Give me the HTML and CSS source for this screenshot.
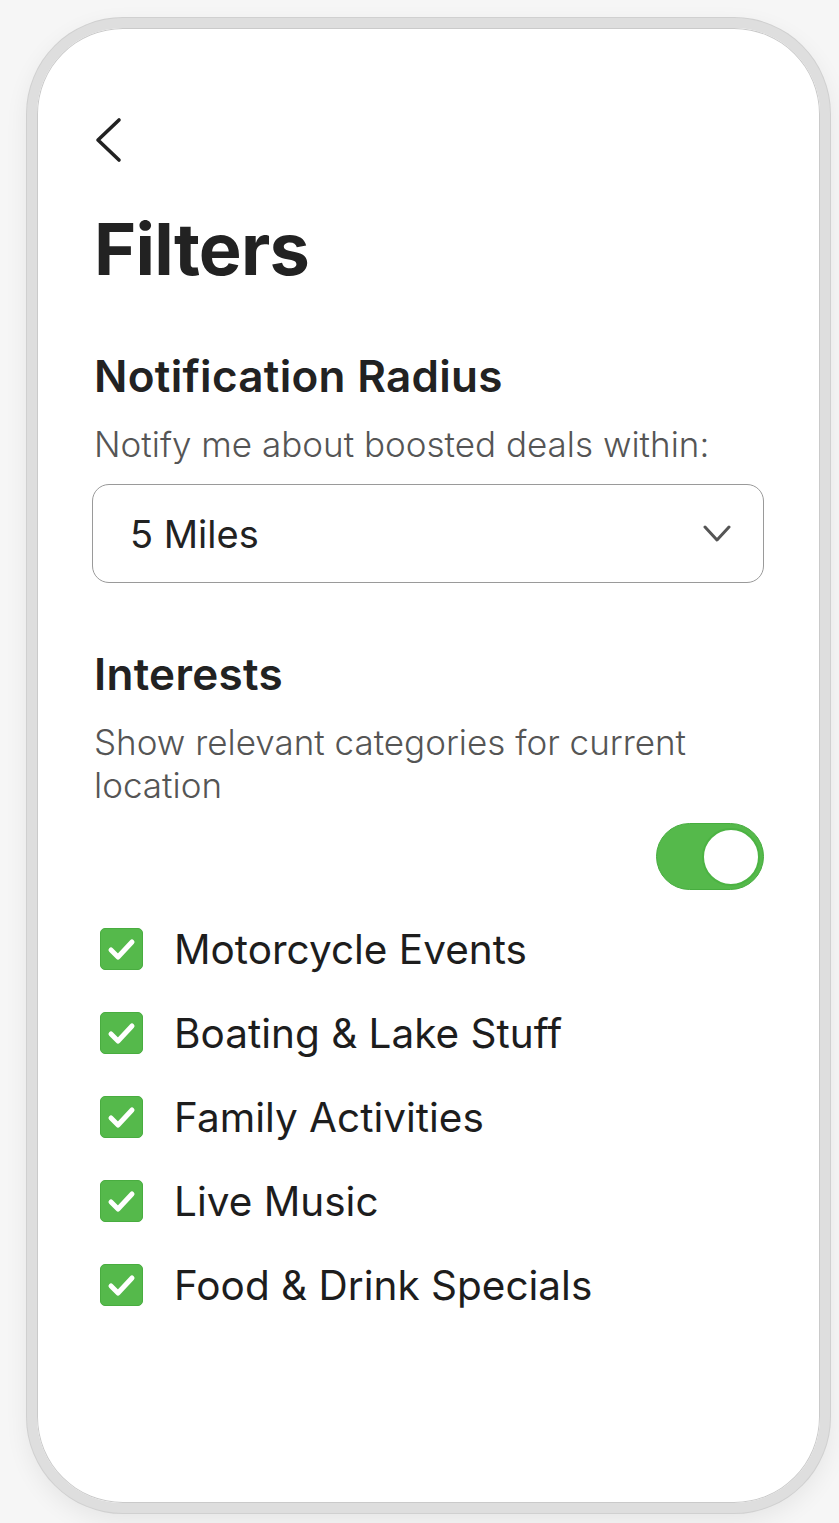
FILE: index.html
```html
<!DOCTYPE html>
<html lang="en">
<head>
<meta charset="utf-8">
<title>Filters</title>
<link rel="stylesheet" href="styles.css">
</head>
<body>
<div class="phone">
  <div class="screen">
    <button class="back" aria-label="Back">
      <svg width="30" height="46" viewBox="0 0 30 46"><polyline points="25,3 4,23 25,43" fill="none" stroke="#222" stroke-width="3.6" stroke-linecap="round" stroke-linejoin="round"/></svg>
    </button>
    <h1 class="title">Filters</h1>

    <h2 class="section-title radius-title">Notification Radius</h2>
    <p class="section-sub">Notify me about boosted deals within:</p>
    <div class="select">
      <span class="select-value">5 Miles</span>
      <svg class="select-chevron" width="28" height="18" viewBox="0 0 28 18"><polyline points="2,2 14,15 26,2" fill="none" stroke="#555" stroke-width="3" stroke-linecap="round" stroke-linejoin="round"/></svg>
    </div>

    <h2 class="section-title interests-title">Interests</h2>
    <p class="section-sub">Show relevant categories for current location</p>
    <div class="toggle-row">
      <div class="toggle"><div class="knob"></div></div>
    </div>

    <ul class="checklist">
      <li class="check-item"><span class="box"><svg width="43" height="42" viewBox="0 0 43 42"><polyline points="11,22 18,29 32,14" fill="none" stroke="#fff" stroke-width="5" stroke-linecap="round" stroke-linejoin="round"/></svg></span><span class="label">Motorcycle Events</span></li>
      <li class="check-item"><span class="box"><svg width="43" height="42" viewBox="0 0 43 42"><polyline points="11,22 18,29 32,14" fill="none" stroke="#fff" stroke-width="5" stroke-linecap="round" stroke-linejoin="round"/></svg></span><span class="label">Boating &amp; Lake Stuff</span></li>
      <li class="check-item"><span class="box"><svg width="43" height="42" viewBox="0 0 43 42"><polyline points="11,22 18,29 32,14" fill="none" stroke="#fff" stroke-width="5" stroke-linecap="round" stroke-linejoin="round"/></svg></span><span class="label">Family Activities</span></li>
      <li class="check-item"><span class="box"><svg width="43" height="42" viewBox="0 0 43 42"><polyline points="11,22 18,29 32,14" fill="none" stroke="#fff" stroke-width="5" stroke-linecap="round" stroke-linejoin="round"/></svg></span><span class="label">Live Music</span></li>
      <li class="check-item"><span class="box"><svg width="43" height="42" viewBox="0 0 43 42"><polyline points="11,22 18,29 32,14" fill="none" stroke="#fff" stroke-width="5" stroke-linecap="round" stroke-linejoin="round"/></svg></span><span class="label">Food &amp; Drink Specials</span></li>
    </ul>
  </div>
</div>
</body>
</html>
```
FILE: styles.css
```css
html, body {
  margin: 0;
  padding: 0;
}
body {
  background: #f6f6f6;
  font-family: Inter, "Noto Sans", "Liberation Sans", sans-serif;
  color: #222;
  width: 839px;
  height: 1523px;
  overflow: hidden;
}
.phone {
  box-sizing: border-box;
  margin: 18px 0 0 27px;
  width: 803px;
  height: 1495px;
  border: 10px solid #dedede;
  border-radius: 96px;
  background: #fff;
  box-shadow: 0 0 0 1px #d0d0d0, inset 0 0 0 1px #cacaca, 0 8px 24px rgba(0,0,0,0.07);
}
.screen {
  padding: 89px 56px 0 57px;
}
.back {
  display: block;
  padding: 0;
  margin: 0;
  border: 0;
  background: none;
  width: 30px;
  height: 46px;
}
.back svg { display: block; }
.title {
  margin: 50px 0 0;
  font-size: 72px;
  line-height: 1;
  font-weight: 700;
  letter-spacing: -0.8px;
  color: #222;
}
.section-title {
  margin: 69px 0 0;
  font-size: 44px;
  line-height: 1;
  font-weight: 600;
  color: #222;
  letter-spacing: 0.3px;
}
.interests-title {
  margin-top: 69px;
}
.section-sub {
  margin: 25px 0 0;
  font-size: 35px;
  line-height: 43px;
  font-weight: 300;
  color: #555;
}
.select {
  box-sizing: border-box;
  margin: 18px 0 0 -2px;
  height: 99px;
  border: 1.5px solid #9a9a9a;
  border-radius: 17px;
  display: flex;
  align-items: center;
  justify-content: space-between;
  padding: 0 32px 0 37px;
}
.select-value {
  font-size: 38px;
  font-weight: 400;
  color: #222;
}
.select-chevron { display: block; }
.toggle-row {
  display: flex;
  justify-content: flex-end;
  margin-top: 16px;
}
.toggle {
  box-sizing: border-box;
  width: 108px;
  height: 67px;
  border-radius: 34px;
  background: #55b94b;
  border: 1px solid #47ad3f;
  display: flex;
  align-items: center;
  justify-content: flex-end;
  padding-right: 3px;
}
.knob {
  box-sizing: border-box;
  width: 58px;
  height: 58px;
  border-radius: 50%;
  background: #fff;
  border: 2px solid #4cb343;
}
.checklist {
  list-style: none;
  margin: 17px 0 0;
  padding: 0;
}
.check-item {
  display: flex;
  align-items: center;
  height: 84px;
}
.box {
  box-sizing: border-box;
  width: 43px;
  height: 42px;
  margin-left: 6px;
  border-radius: 5px;
  background: #55b94b;
  border: 1px solid #49ad40;
  display: flex;
}
.box svg { display: block; margin: -1px; }
.label {
  margin-left: 31px;
  font-size: 40.5px;
  font-weight: 400;
  color: #1d1d1d;
}
```
